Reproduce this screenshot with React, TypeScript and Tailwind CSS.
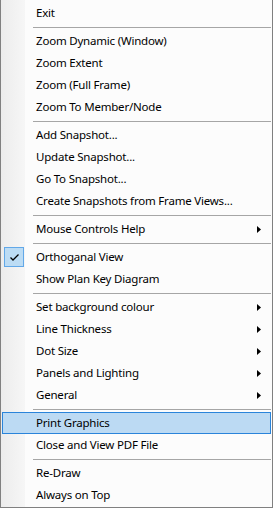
import React from "react";

type Entry =
  | { kind: "sep" }
  | { kind: "item"; label: string; sub?: boolean; checked?: boolean; hot?: boolean };

const MENU: Entry[] = [
  { kind: "item", label: "Exit" },
  { kind: "sep" },
  { kind: "item", label: "Zoom Dynamic (Window)" },
  { kind: "item", label: "Zoom Extent" },
  { kind: "item", label: "Zoom (Full Frame)" },
  { kind: "item", label: "Zoom To Member/Node" },
  { kind: "sep" },
  { kind: "item", label: "Add Snapshot..." },
  { kind: "item", label: "Update Snapshot..." },
  { kind: "item", label: "Go To Snapshot..." },
  { kind: "item", label: "Create Snapshots from Frame Views..." },
  { kind: "sep" },
  { kind: "item", label: "Mouse Controls Help", sub: true },
  { kind: "sep" },
  { kind: "item", label: "Orthoganal View", checked: true },
  { kind: "item", label: "Show Plan Key Diagram" },
  { kind: "sep" },
  { kind: "item", label: "Set background colour", sub: true },
  { kind: "item", label: "Line Thickness", sub: true },
  { kind: "item", label: "Dot Size", sub: true },
  { kind: "item", label: "Panels and Lighting", sub: true },
  { kind: "item", label: "General", sub: true },
  { kind: "sep" },
  { kind: "item", label: "Print Graphics", hot: true },
  { kind: "item", label: "Close and View PDF File" },
  { kind: "sep" },
  { kind: "item", label: "Re-Draw" },
  { kind: "item", label: "Always on Top" },
];

function CheckMark() {
  return (
    <svg width="9" height="7" viewBox="0 0 9 7" className="block">
      <path d="M0.5 3.5 L3 6 L8.5 0.5" fill="none" stroke="#000" strokeWidth="1.3" />
    </svg>
  );
}

function SubArrow() {
  return (
    <svg width="4" height="7" viewBox="0 0 4 7" className="ml-auto mr-[9px] block">
      <path d="M0 0 L4 3.5 L0 7 Z" fill="#000" />
    </svg>
  );
}

export default function App() {
  return (
    <div
      className="w-[273px] h-[508px] border-x border-b border-[#808080] bg-[linear-gradient(to_right,#ececec,#f6f6f6_24px,#fcfcfc_24px)] pt-[2px] text-[11.5px] tracking-[-0.2px] text-black"
      style={{ fontFamily: '"Noto Sans", "Open Sans", sans-serif' }}
    >
      {MENU.map((e, i) =>
        e.kind === "sep" ? (
          <div key={i} className="h-[6px] flex items-center pl-[32px] pr-px">
            <div className="h-px w-full bg-[#a6a6a6]" />
          </div>
        ) : (
          <div
            key={i}
            className={`relative mx-px h-[22px] flex items-center pl-[33px] border ${
              e.hot ? "bg-[#bcdaf3] border-[#2a84da]" : "border-transparent"
            }`}
          >
            {e.checked && (
              <div className="absolute left-px top-0 w-5 h-5 border border-[#62a8e8] bg-[#bcdcf4] flex items-center justify-center">
                <CheckMark />
              </div>
            )}
            <span className="whitespace-nowrap leading-none">{e.label}</span>
            {e.sub && <SubArrow />}
          </div>
        )
      )}
    </div>
  );
}
